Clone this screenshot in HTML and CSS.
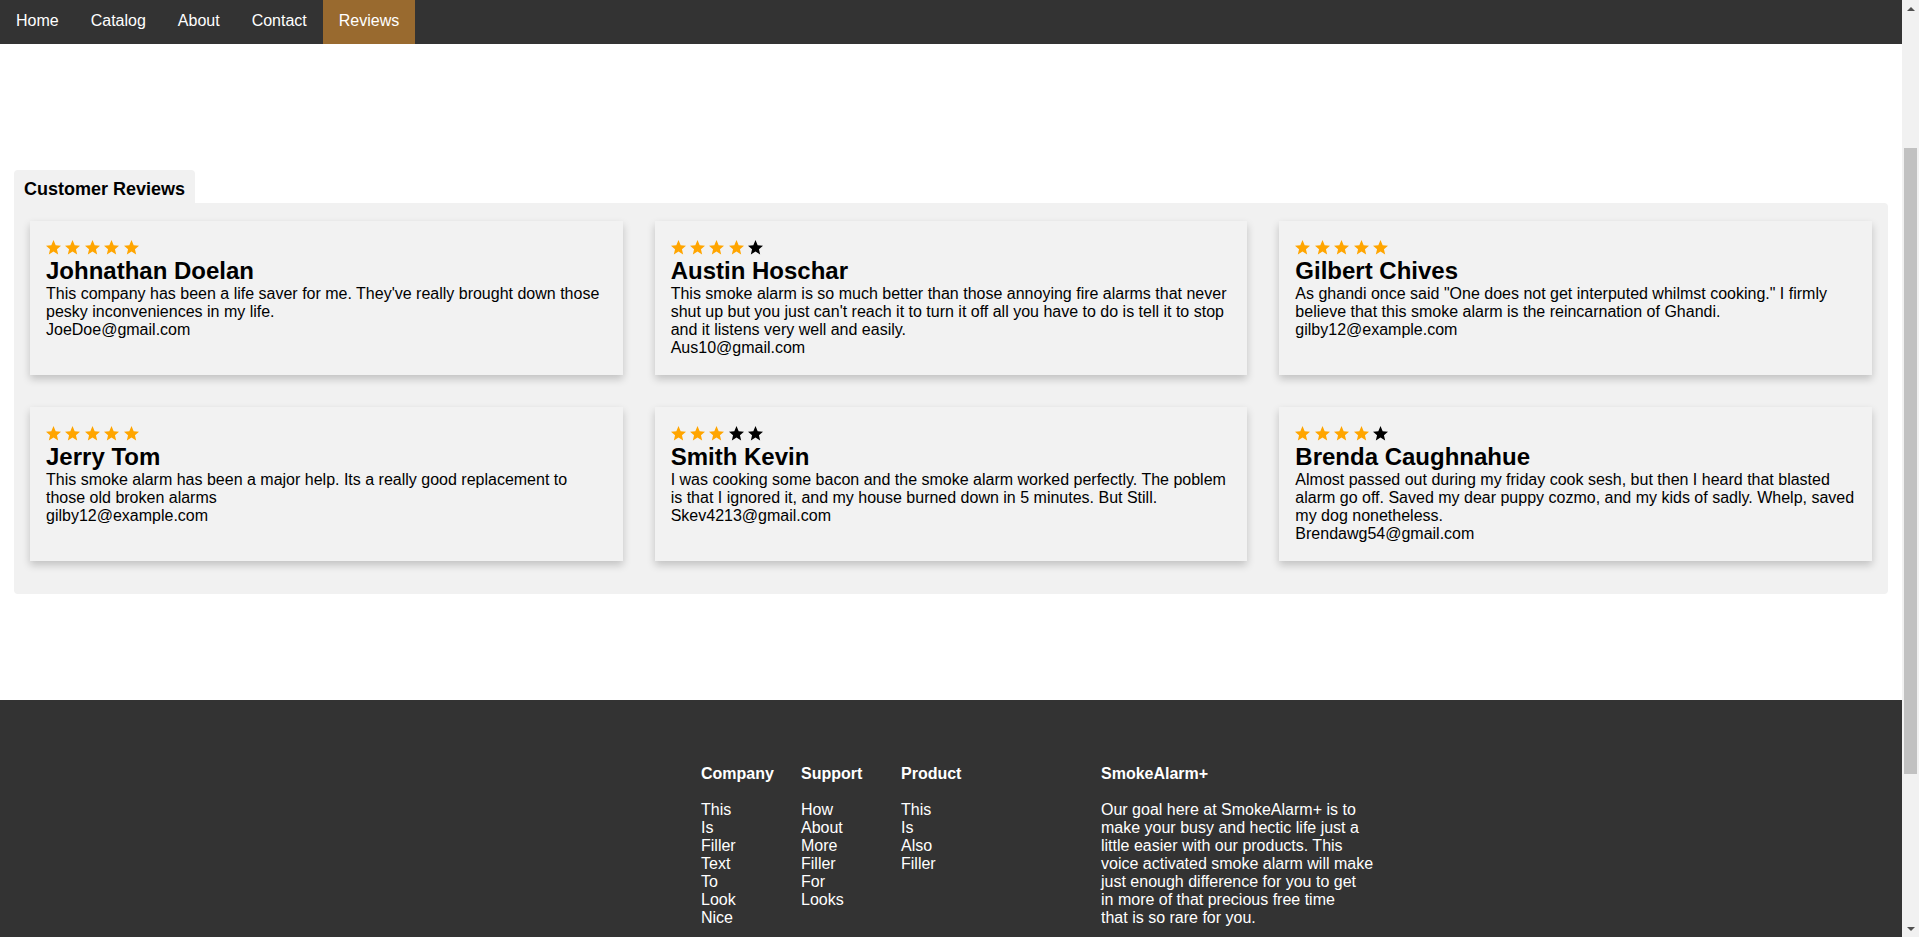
FILE: index.html
```html
<!DOCTYPE html>
<html lang="en">
<head>
<meta charset="utf-8">
<title>Reviews - SmokeAlarm+</title>
<link rel="stylesheet" href="styles.css">
</head>
<body>
<nav class="topnav">
  <a href="#">Home</a>
  <a href="#">Catalog</a>
  <a href="#">About</a>
  <a href="#">Contact</a>
  <a href="#" class="active">Reviews</a>
</nav>

<main class="reviews">
  <div class="tab">Customer Reviews</div>
  <div class="panel">
    <div class="grid">
      <article class="card">
        <div class="stars">
          <svg class="star on" viewBox="2 2 20 19.2"><path d="M12 2l2.9 6.9 7.1.6-5.4 4.7 1.6 7-6.2-3.8-6.2 3.8 1.6-7L2 9.5l7.1-.6z"/></svg>
          <svg class="star on" viewBox="2 2 20 19.2"><path d="M12 2l2.9 6.9 7.1.6-5.4 4.7 1.6 7-6.2-3.8-6.2 3.8 1.6-7L2 9.5l7.1-.6z"/></svg>
          <svg class="star on" viewBox="2 2 20 19.2"><path d="M12 2l2.9 6.9 7.1.6-5.4 4.7 1.6 7-6.2-3.8-6.2 3.8 1.6-7L2 9.5l7.1-.6z"/></svg>
          <svg class="star on" viewBox="2 2 20 19.2"><path d="M12 2l2.9 6.9 7.1.6-5.4 4.7 1.6 7-6.2-3.8-6.2 3.8 1.6-7L2 9.5l7.1-.6z"/></svg>
          <svg class="star on" viewBox="2 2 20 19.2"><path d="M12 2l2.9 6.9 7.1.6-5.4 4.7 1.6 7-6.2-3.8-6.2 3.8 1.6-7L2 9.5l7.1-.6z"/></svg>
        </div>
        <h2 class="name">Johnathan Doelan</h2>
        <p class="text">This company has been a life saver for me. They've really brought down those pesky inconveniences in my life.<br>JoeDoe@gmail.com</p>
      </article>

      <article class="card">
        <div class="stars">
          <svg class="star on" viewBox="2 2 20 19.2"><path d="M12 2l2.9 6.9 7.1.6-5.4 4.7 1.6 7-6.2-3.8-6.2 3.8 1.6-7L2 9.5l7.1-.6z"/></svg>
          <svg class="star on" viewBox="2 2 20 19.2"><path d="M12 2l2.9 6.9 7.1.6-5.4 4.7 1.6 7-6.2-3.8-6.2 3.8 1.6-7L2 9.5l7.1-.6z"/></svg>
          <svg class="star on" viewBox="2 2 20 19.2"><path d="M12 2l2.9 6.9 7.1.6-5.4 4.7 1.6 7-6.2-3.8-6.2 3.8 1.6-7L2 9.5l7.1-.6z"/></svg>
          <svg class="star on" viewBox="2 2 20 19.2"><path d="M12 2l2.9 6.9 7.1.6-5.4 4.7 1.6 7-6.2-3.8-6.2 3.8 1.6-7L2 9.5l7.1-.6z"/></svg>
          <svg class="star" viewBox="2 2 20 19.2"><path d="M12 2l2.9 6.9 7.1.6-5.4 4.7 1.6 7-6.2-3.8-6.2 3.8 1.6-7L2 9.5l7.1-.6z"/></svg>
        </div>
        <h2 class="name">Austin Hoschar</h2>
        <p class="text">This smoke alarm is so much better than those annoying fire alarms that never shut up but you just can't reach it to turn it off all you have to do is tell it to stop and it listens very well and easily.<br>Aus10@gmail.com</p>
      </article>

      <article class="card">
        <div class="stars">
          <svg class="star on" viewBox="2 2 20 19.2"><path d="M12 2l2.9 6.9 7.1.6-5.4 4.7 1.6 7-6.2-3.8-6.2 3.8 1.6-7L2 9.5l7.1-.6z"/></svg>
          <svg class="star on" viewBox="2 2 20 19.2"><path d="M12 2l2.9 6.9 7.1.6-5.4 4.7 1.6 7-6.2-3.8-6.2 3.8 1.6-7L2 9.5l7.1-.6z"/></svg>
          <svg class="star on" viewBox="2 2 20 19.2"><path d="M12 2l2.9 6.9 7.1.6-5.4 4.7 1.6 7-6.2-3.8-6.2 3.8 1.6-7L2 9.5l7.1-.6z"/></svg>
          <svg class="star on" viewBox="2 2 20 19.2"><path d="M12 2l2.9 6.9 7.1.6-5.4 4.7 1.6 7-6.2-3.8-6.2 3.8 1.6-7L2 9.5l7.1-.6z"/></svg>
          <svg class="star on" viewBox="2 2 20 19.2"><path d="M12 2l2.9 6.9 7.1.6-5.4 4.7 1.6 7-6.2-3.8-6.2 3.8 1.6-7L2 9.5l7.1-.6z"/></svg>
        </div>
        <h2 class="name">Gilbert Chives</h2>
        <p class="text">As ghandi once said "One does not get interputed whilmst cooking." I firmly believe that this smoke alarm is the reincarnation of Ghandi.<br>gilby12@example.com</p>
      </article>

      <article class="card">
        <div class="stars">
          <svg class="star on" viewBox="2 2 20 19.2"><path d="M12 2l2.9 6.9 7.1.6-5.4 4.7 1.6 7-6.2-3.8-6.2 3.8 1.6-7L2 9.5l7.1-.6z"/></svg>
          <svg class="star on" viewBox="2 2 20 19.2"><path d="M12 2l2.9 6.9 7.1.6-5.4 4.7 1.6 7-6.2-3.8-6.2 3.8 1.6-7L2 9.5l7.1-.6z"/></svg>
          <svg class="star on" viewBox="2 2 20 19.2"><path d="M12 2l2.9 6.9 7.1.6-5.4 4.7 1.6 7-6.2-3.8-6.2 3.8 1.6-7L2 9.5l7.1-.6z"/></svg>
          <svg class="star on" viewBox="2 2 20 19.2"><path d="M12 2l2.9 6.9 7.1.6-5.4 4.7 1.6 7-6.2-3.8-6.2 3.8 1.6-7L2 9.5l7.1-.6z"/></svg>
          <svg class="star on" viewBox="2 2 20 19.2"><path d="M12 2l2.9 6.9 7.1.6-5.4 4.7 1.6 7-6.2-3.8-6.2 3.8 1.6-7L2 9.5l7.1-.6z"/></svg>
        </div>
        <h2 class="name">Jerry Tom</h2>
        <p class="text">This smoke alarm has been a major help. Its a really good replacement to those old broken alarms<br>gilby12@example.com</p>
      </article>

      <article class="card">
        <div class="stars">
          <svg class="star on" viewBox="2 2 20 19.2"><path d="M12 2l2.9 6.9 7.1.6-5.4 4.7 1.6 7-6.2-3.8-6.2 3.8 1.6-7L2 9.5l7.1-.6z"/></svg>
          <svg class="star on" viewBox="2 2 20 19.2"><path d="M12 2l2.9 6.9 7.1.6-5.4 4.7 1.6 7-6.2-3.8-6.2 3.8 1.6-7L2 9.5l7.1-.6z"/></svg>
          <svg class="star on" viewBox="2 2 20 19.2"><path d="M12 2l2.9 6.9 7.1.6-5.4 4.7 1.6 7-6.2-3.8-6.2 3.8 1.6-7L2 9.5l7.1-.6z"/></svg>
          <svg class="star" viewBox="2 2 20 19.2"><path d="M12 2l2.9 6.9 7.1.6-5.4 4.7 1.6 7-6.2-3.8-6.2 3.8 1.6-7L2 9.5l7.1-.6z"/></svg>
          <svg class="star" viewBox="2 2 20 19.2"><path d="M12 2l2.9 6.9 7.1.6-5.4 4.7 1.6 7-6.2-3.8-6.2 3.8 1.6-7L2 9.5l7.1-.6z"/></svg>
        </div>
        <h2 class="name">Smith Kevin</h2>
        <p class="text">I was cooking some bacon and the smoke alarm worked perfectly. The poblem is that I ignored it, and my house burned down in 5 minutes. But Still.<br>Skev4213@gmail.com</p>
      </article>

      <article class="card">
        <div class="stars">
          <svg class="star on" viewBox="2 2 20 19.2"><path d="M12 2l2.9 6.9 7.1.6-5.4 4.7 1.6 7-6.2-3.8-6.2 3.8 1.6-7L2 9.5l7.1-.6z"/></svg>
          <svg class="star on" viewBox="2 2 20 19.2"><path d="M12 2l2.9 6.9 7.1.6-5.4 4.7 1.6 7-6.2-3.8-6.2 3.8 1.6-7L2 9.5l7.1-.6z"/></svg>
          <svg class="star on" viewBox="2 2 20 19.2"><path d="M12 2l2.9 6.9 7.1.6-5.4 4.7 1.6 7-6.2-3.8-6.2 3.8 1.6-7L2 9.5l7.1-.6z"/></svg>
          <svg class="star on" viewBox="2 2 20 19.2"><path d="M12 2l2.9 6.9 7.1.6-5.4 4.7 1.6 7-6.2-3.8-6.2 3.8 1.6-7L2 9.5l7.1-.6z"/></svg>
          <svg class="star" viewBox="2 2 20 19.2"><path d="M12 2l2.9 6.9 7.1.6-5.4 4.7 1.6 7-6.2-3.8-6.2 3.8 1.6-7L2 9.5l7.1-.6z"/></svg>
        </div>
        <h2 class="name">Brenda Caughnahue</h2>
        <p class="text">Almost passed out during my friday cook sesh, but then I heard that blasted alarm go off. Saved my dear puppy cozmo, and my kids of sadly. Whelp, saved my dog nonetheless.<br>Brendawg54@gmail.com</p>
      </article>
    </div>
  </div>
</main>

<footer class="footer">
  <div class="footer-inner">
    <div class="fcol">
      <h4 class="fhead">Company</h4>
      <ul class="flist"><li>This</li><li>Is</li><li>Filler</li><li>Text</li><li>To</li><li>Look</li><li>Nice</li></ul>
    </div>
    <div class="fcol">
      <h4 class="fhead">Support</h4>
      <ul class="flist"><li>How</li><li>About</li><li>More</li><li>Filler</li><li>For</li><li>Looks</li></ul>
    </div>
    <div class="fcol">
      <h4 class="fhead">Product</h4>
      <ul class="flist"><li>This</li><li>Is</li><li>Also</li><li>Filler</li></ul>
    </div>
    <div class="fcol">
      <h4 class="fhead">SmokeAlarm+</h4>
      <p class="fabout">Our goal here at SmokeAlarm+ is to<br>make your busy and hectic life just a<br>little easier with our products. This<br>voice activated smoke alarm will make<br>just enough difference for you to get<br>in more of that precious free time<br>that is so rare for you.</p>
    </div>
  </div>
</footer>

<div class="scrollbar" aria-hidden="true">
  <span class="sb-arrow sb-up"></span>
  <span class="sb-track"><span class="sb-thumb"></span></span>
  <span class="sb-arrow sb-down"></span>
</div>
</body>
</html>
```

FILE: styles.css
```css
* { box-sizing: border-box; }

html, body {
  margin: 0;
  padding: 0;
}

body {
  font-family: "Liberation Sans", Arial, Helvetica, sans-serif;
  font-size: 16px;
  color: #000;
  background: #fff;
  padding-right: 17px;
}

/* top navigation */
.topnav {
  display: flex;
  height: 44px;
  background: #333;
}

.topnav a {
  display: block;
  padding: 0 16px;
  line-height: 42px;
  color: #fff;
  text-decoration: none;
  font-size: 16px;
}

.topnav a.active {
  background: #996a2f;
}

/* reviews */
.reviews {
  margin: 126px 14px 106px;
}

.tab {
  display: inline-block;
  padding: 9px 10px 3px;
  font-size: 18px;
  font-weight: bold;
  line-height: 21px;
  background: #f1f1f1;
  border-radius: 4px 4px 0 0;
}

.panel {
  background: #f1f1f1;
  padding: 18px 16px 33px;
  border-radius: 0 4px 4px 4px;
}

.grid {
  display: grid;
  grid-template-columns: repeat(3, 1fr);
  gap: 32px;
}

.card {
  background: #f2f2f2;
  padding: 17px 16px 18px;
  box-shadow: 0 4px 8px 0 rgba(0, 0, 0, 0.2);
}

.stars {
  display: flex;
  align-items: center;
  gap: 4.4px;
  height: 19px;
}

.star {
  width: 15px;
  height: 14.5px;
  fill: #000;
}

.star.on {
  fill: #ffa500;
}

.name {
  margin: 0;
  font-size: 24px;
  font-weight: bold;
  line-height: 27.6px;
}

.text {
  margin: 0;
  line-height: 18.1px;
}

/* footer */
.footer {
  background: #333;
  color: #fff;
  padding: 65px 0 226px;
}

.footer-inner {
  width: 500px;
  margin: 0 auto;
  display: grid;
  grid-template-columns: 100px 100px 200px 300px;
  line-height: 18px;
}

.fhead {
  margin: 0 0 18px;
  font-size: 16px;
  font-weight: bold;
}

.flist {
  list-style: none;
  margin: 0;
  padding: 0;
}

.fabout {
  margin: 0;
  white-space: nowrap;
}

/* browser scrollbar as seen in the screenshot */
.scrollbar {
  position: fixed;
  top: 0;
  right: 0;
  width: 17px;
  height: 100vh;
  background: #f1f1f1;
  display: flex;
  flex-direction: column;
}

.sb-arrow {
  height: 17px;
  flex: none;
  display: flex;
  align-items: center;
  justify-content: center;
}

.sb-arrow::before {
  content: "";
  width: 0;
  height: 0;
  border-left: 4px solid transparent;
  border-right: 4px solid transparent;
}

.sb-up::before {
  border-bottom: 4px solid #505050;
}

.sb-down::before {
  border-top: 4px solid #505050;
}

.sb-track {
  flex: 1;
  padding: 131px 2px 146px;
  display: flex;
}

.sb-thumb {
  flex: 1;
  background: #c1c1c1;
}
```
